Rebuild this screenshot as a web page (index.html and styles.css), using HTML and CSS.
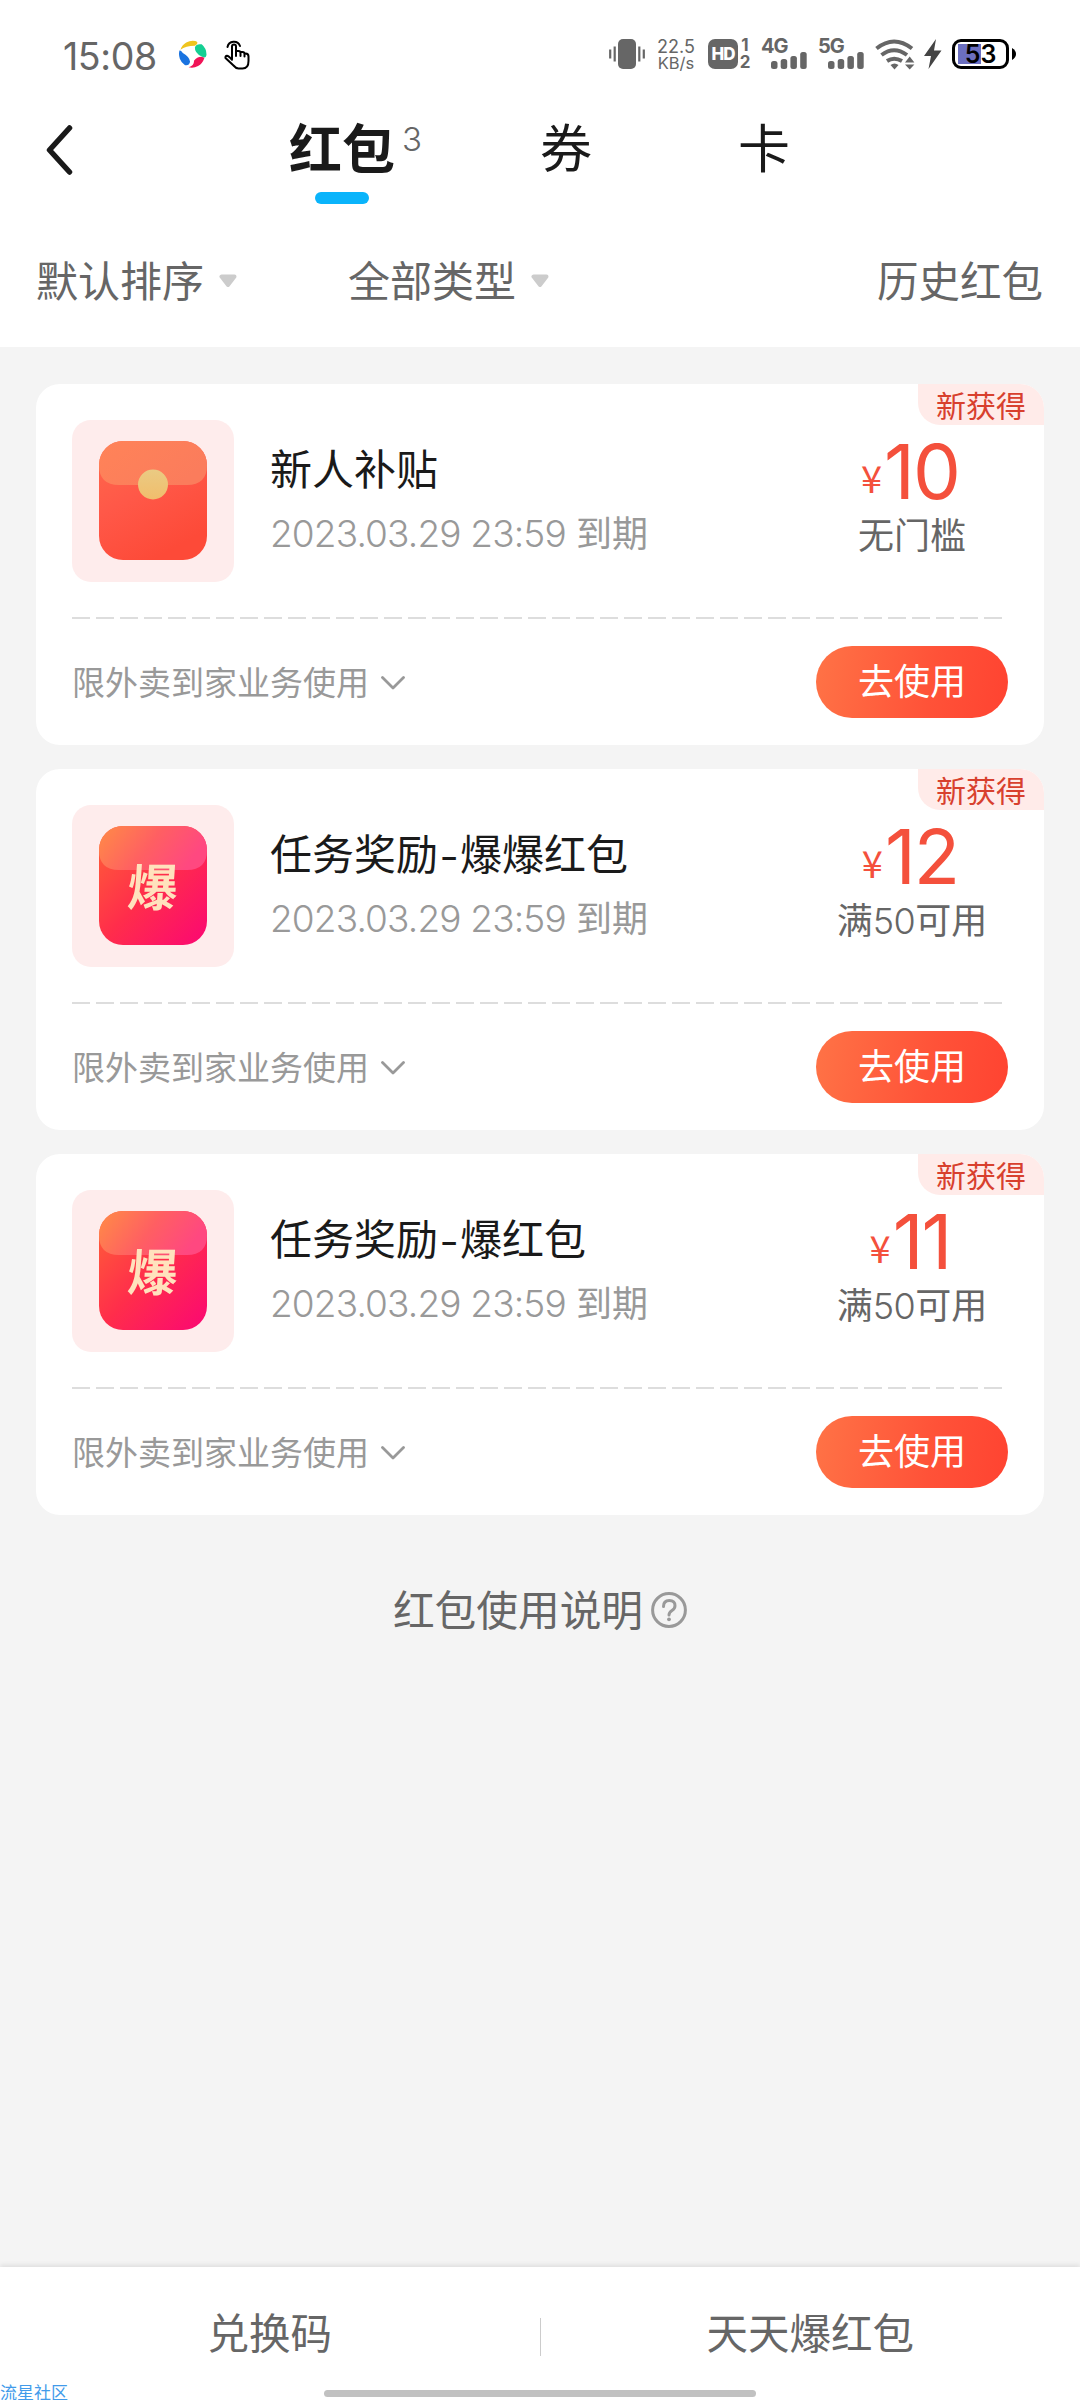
FILE: index.html
```html
<!DOCTYPE html>
<html lang="zh-CN">
<head>
<meta charset="utf-8">
<title>红包</title>
<link rel="stylesheet" href="styles.css">
</head>
<body>
<svg class="defs" width="0" height="0" aria-hidden="true">
  <defs>
    <linearGradient id="red" x1="0" y1="0" x2="0.5" y2="1"><stop offset="0" stop-color="#ff6a4c"/><stop offset="0.5" stop-color="#ff5848"/><stop offset="1" stop-color="#fd4a38"/></linearGradient>
    <linearGradient id="flap" x1="0" y1="0" x2="1" y2="0.5"><stop offset="0" stop-color="#ff8358"/><stop offset="1" stop-color="#fb7c5c"/></linearGradient>
    <linearGradient id="coin" x1="0" y1="0" x2="0" y2="1"><stop offset="0" stop-color="#eacb83"/><stop offset="1" stop-color="#f1bd6c"/></linearGradient>
    <linearGradient id="hot" x1="0" y1="0" x2="1" y2="1"><stop offset="0" stop-color="#ff6236"/><stop offset="0.5" stop-color="#ff2d4b"/><stop offset="1" stop-color="#fb0773"/></linearGradient>
    <linearGradient id="hotflap" x1="0" y1="0" x2="1" y2="0.3"><stop offset="0" stop-color="#ff8c46"/><stop offset="0.55" stop-color="#ff5f62"/><stop offset="1" stop-color="#ff4880"/></linearGradient>
    <symbol id="plain" viewBox="0 0 162 162">
      <rect x="27" y="21" width="108" height="119" rx="24" fill="url(#red)"/>
      <path d="M27 45a24 24 0 0 1 24-24h60a24 24 0 0 1 24 24q0 20-20 20H47q-20 0-20-20z" fill="url(#flap)"/>
      <circle cx="81" cy="64.500" r="15" fill="url(#coin)"/>
    </symbol>
    <symbol id="burst" viewBox="0 0 162 162">
      <rect x="27" y="21" width="108" height="119" rx="24" fill="url(#hot)"/>
      <path d="M27 45a24 24 0 0 1 24-24h60a24 24 0 0 1 24 24q0 20-20 20H47q-20 0-20-20z" fill="url(#hotflap)"/>
    </symbol>
    <symbol id="down" viewBox="0 0 24 14"><path d="M1.500 1.500 12 12 22.500 1.500" fill="none" stroke="#999" stroke-width="2.800" stroke-linecap="round" stroke-linejoin="round"/></symbol>
    <symbol id="tri" viewBox="0 0 18 14"><path d="M2.500 2.500h13L9 11z" fill="#ccc" stroke="#ccc" stroke-width="4" stroke-linejoin="round"/></symbol>
    <symbol id="bars" viewBox="0 0 36 17" fill="#666"><rect y="9" width="6.500" height="8" rx="2.500"/><rect x="9.700" y="7" width="6.500" height="10" rx="2.500"/><rect x="19.400" y="4" width="6.500" height="13" rx="2.500"/><rect x="29.200" y="0" width="6.500" height="17" rx="2.500"/></symbol>
  </defs>
</svg>
<div class="page">
  <header class="top">
    <div class="status">
      <span class="time">15:08</span>
      <svg class="wheel" viewBox="0 0 30 30">
        <path d="M2.500 10.500A13.500 13.500 0 0 1 18 1.500Q22.500 3 17.500 6.500Q8 6.500 2.500 10.500z" fill="#efc41e"/>
        <path d="M17.500 8Q19 4 24.500 5A14 14 0 0 1 29.500 15.500Q29 20.500 24.500 17.500Q17 14 17.500 8z" fill="#14cf93"/>
        <path d="M27 20A13.500 13.500 0 0 1 11 28.800Q17 26.500 16.500 22Q20 17.500 25 18Q28 18.500 27 20z" fill="#f01457"/>
        <path d="M1.500 11.500Q3 10.500 5 14Q12 18 12.500 23Q11.500 27.500 7 26.500A14 14 0 0 1 1.500 11.500z" fill="#1a73e0"/>
      </svg>
      <svg class="hand" viewBox="0 0 26 31" fill="none" stroke="#000" stroke-width="2" stroke-linecap="round" stroke-linejoin="round">
        <path d="M8 20V7.500a2 2 0 0 1 4 0V17M12 12h2.500a2 2 0 0 1 2 2v3M16.500 13h2a2 2 0 0 1 2 2v2.500M20.500 14.500h1a3 3 0 0 1 3 3V22q0 7.500-6 7.500h-4q-2.500 0-5-3L1.500 19q-.5-2 1.500-2.200 1.500 0 5 4"/>
        <path d="M3.500 8A6.500 6.500 0 0 1 16 7"/>
      </svg>
      <svg class="vib" viewBox="0 0 36 30" fill="#666"><rect x="9" width="18" height="30" rx="5"/><path d="M1.200 10.500v9M5.700 7.500v15M30.300 7.500v15M34.800 10.500v9" stroke="#666" stroke-width="2.200"/></svg>
      <div class="speed"><span>22.5</span><span>KB/s</span></div>
      <div class="hd">HD</div>
      <div class="sim"><span>1</span><span>2</span></div>
      <div class="net"><span>4G</span><svg><use href="#bars"/></svg></div>
      <div class="net net2"><span>5G</span><svg><use href="#bars"/></svg></div>
      <svg class="wifi" viewBox="0 0 40 31"><g fill="none" stroke="#666" stroke-width="4"><path d="M1.500 9.500Q19 -4.500 37 9.500"/><path d="M6.500 16Q19 6.500 32 16"/><path d="M12 22Q19 17.500 27 22"/></g><path d="M15.500 26q4-3 8 0l-4 4.500zM30 23.500l4.700-6 4.700 6zM30 25.500h9.400l-4.700 5z" fill="#666"/></svg>
      <svg class="bolt" viewBox="0 0 18 30"><path d="M12 0 0 17h7L4.500 30 17.500 11.500H10z" fill="#444"/></svg>
      <div class="battery"><span>53</span></div>
      <svg class="nub" viewBox="0 0 4 12"><path d="M0 0q4 2.500 4 6t-4 6z"/></svg>
    </div>
    <nav class="tabs">
      <svg class="back" viewBox="0 0 28 50"><path d="M24.500 3 4.500 25 24.500 47" fill="none" stroke="#1a1a1a" stroke-width="5.500" stroke-linecap="round" stroke-linejoin="round"/></svg>
      <div class="tab active"><b>红包</b><i></i></div>
      <span class="count">3</span>
      <div class="tab coupon">券</div>
      <div class="tab cardtab">卡</div>
    </nav>
    <div class="filters">
      <span>默认排序</span><svg class="tri"><use href="#tri"/></svg>
      <span class="type">全部类型</span><svg class="tri"><use href="#tri"/></svg>
      <span class="history">历史红包</span>
    </div>
  </header>

  <main class="list">
    <article class="card">
      <span class="badge">新获得</span>
      <div class="info">
        <div class="icon"><svg><use href="#plain"/></svg></div>
        <div class="desc"><h2>新人补贴</h2><p><span class="num">2023.03.29 23:59</span>到期</p></div>
        <div class="worth"><div class="price"><small>¥</small><span>10</span></div><p>无门槛</p></div>
      </div>
      <svg class="dash"><path d="M0 1H931"/></svg>
      <div class="foot"><span>限外卖到家业务使用</span><svg class="chev"><use href="#down"/></svg><a class="use">去使用</a></div>
    </article>
    <article class="card">
      <span class="badge">新获得</span>
      <div class="info">
        <div class="icon"><svg><use href="#burst"/></svg><em>爆</em></div>
        <div class="desc"><h2>任务奖励<span class="hy">-</span>爆爆红包</h2><p><span class="num">2023.03.29 23:59</span>到期</p></div>
        <div class="worth"><div class="price"><small>¥</small><span>12</span></div><p>满<span class="fifty">50</span>可用</p></div>
      </div>
      <svg class="dash"><path d="M0 1H931"/></svg>
      <div class="foot"><span>限外卖到家业务使用</span><svg class="chev"><use href="#down"/></svg><a class="use">去使用</a></div>
    </article>
    <article class="card">
      <span class="badge">新获得</span>
      <div class="info">
        <div class="icon"><svg><use href="#burst"/></svg><em>爆</em></div>
        <div class="desc"><h2>任务奖励<span class="hy">-</span>爆红包</h2><p><span class="num">2023.03.29 23:59</span>到期</p></div>
        <div class="worth"><div class="price"><small>¥</small><span>11</span></div><p>满<span class="fifty">50</span>可用</p></div>
      </div>
      <svg class="dash"><path d="M0 1H931"/></svg>
      <div class="foot"><span>限外卖到家业务使用</span><svg class="chev"><use href="#down"/></svg><a class="use">去使用</a></div>
    </article>
    <div class="help"><span>红包使用说明</span>
      <svg viewBox="0 0 36 36" fill="none" stroke="#999" stroke-width="3"><circle cx="18" cy="18" r="16.400"/><path d="M12.500 14.500q0-6 5.800-6t5.700 5.200q0 2.800-3 4.800t-3 4.500" stroke-linecap="round"/><circle cx="18" cy="27.300" r="1.900" fill="#999" stroke="none"/></svg>
    </div>
  </main>

  <footer class="bottom">
    <span class="act">兑换码</span><i></i><span class="act">天天爆红包</span>
  </footer>
  <div class="home"></div>
  <div class="mark">流星社区</div>
</div>
</body>
</html>
```
FILE: styles.css
```css
* { box-sizing: border-box; margin: 0; padding: 0; }
body { background: #f4f4f4; font-family: "Noto Sans CJK SC", sans-serif; color: #666; }
svg { display: block; flex: none; }
.defs { position: absolute; }
.page { position: relative; width: 1080px; height: 2400px; display: flex; flex-direction: column; overflow: hidden; }
i, em { font-style: normal; }

.top { background: #fff; height: 347px; flex: none; }
.status { display: flex; align-items: flex-start; height: 100px; padding: 39px 0 0 63px; font-family: Inter, sans-serif; }
.time { width: 115px; font-size: 37.500px; line-height: 35px; letter-spacing: -.4px; }
.wheel { width: 29px; height: 30px; }
.hand { width: 26px; height: 31px; margin-left: 17px; }
.vib { width: 36px; height: 30px; margin-left: 359px; }
.speed { display: flex; flex-direction: column; width: 38px; margin-left: 12px; font-size: 18px; line-height: 16px; text-align: center; white-space: nowrap; align-items: center; }
.speed span:last-child { font-size: 16.500px; }
.hd { width: 30px; height: 30px; margin-left: 13px; border-radius: 7px; background: #666; color: #fff; font-size: 17px; font-weight: 800; line-height: 30px; text-align: center; letter-spacing: -1px; }
.sim { display: flex; flex-direction: column; width: 12px; margin-left: 1px; font-size: 17px; font-weight: 700; line-height: 13px; text-align: center; align-items: center; }
.sim span:last-child { line-height: 20px; }
.net { width: 46px; margin-left: 10px; }
.net span { display: block; font-size: 20px; line-height: 15px; height: 13px; font-weight: 700; letter-spacing: -1px; }
.net svg { width: 36px; height: 17px; margin-left: 10px; }
.net2 { margin-left: 11px; }
.wifi { width: 40px; height: 31px; margin-left: 11px; }
.bolt { width: 18px; height: 30px; margin-left: 9px; }
.battery { width: 57px; height: 30px; margin-left: 10px; border: 3px solid #000; border-radius: 9px; background: linear-gradient(90deg, #6b6fc0 23px, #fff 23px) 3px 2px / 45px 20px no-repeat; color: #000; font-size: 25px; font-weight: 600; line-height: 24px; text-align: center; }
.nub { width: 4px; height: 12px; margin: 9px 0 0 3px; }

.tabs { display: flex; height: 120px; padding: 0 0 0 45px; color: #1a1a1a; font-size: 52px; line-height: 74px; }
.back { width: 28px; height: 50px; margin-top: 25px; }
.tab { margin-top: 9px; }
.active { display: flex; flex-direction: column; align-items: center; width: 106px; margin-left: 216px; }
.active b { font-size: 53px; line-height: 74px; white-space: nowrap; }
.active i { width: 54px; height: 12px; margin-top: 9px; border-radius: 6px; background: #0ab4fb; }
.count { width: 20px; margin: 19px 0 0 7px; color: #666; font: 300 33px/40px Inter, sans-serif; }
.coupon { margin-left: 118px; }
.cardtab { margin-left: 146px; }

.filters { display: flex; align-items: center; padding: 29px 37px 0 36px; font-size: 42px; line-height: 60px; }
.tri { width: 18px; height: 14px; margin: 3px 0 0 15px; }
.type { margin-left: 111px; }
.history { margin-left: auto; font-size: 41.500px; }

.list { flex: 1; padding: 37px 36px 0; display: flex; flex-direction: column; gap: 24px; }
.card { position: relative; height: 361px; flex: none; padding: 36px; border-radius: 24px; background: #fff; }
.badge { position: absolute; top: 0; right: 0; width: 126px; height: 41px; padding-left: 18px; border-radius: 0 24px 0 22px; background: #ffebe9; color: #d8402e; font-size: 30px; line-height: 40px; }
.info { display: flex; height: 162px; }
.icon { position: relative; width: 162px; height: 162px; border-radius: 19px; background: #feecec; }
.icon svg { width: 162px; height: 162px; }
.icon em { position: absolute; inset: 0; color: #ffe2bd; font-size: 50px; font-weight: 700; line-height: 158px; text-align: center; transform: skewX(-4deg); }
.desc { flex: 1; padding: 17px 0 0 36px; }
.desc h2 { color: #1a1a1a; font-size: 42px; font-weight: 400; line-height: 60px; white-space: nowrap; }
.hy { display: inline-block; width: 22px; text-align: center; transform: scaleX(1.25); }
.desc p { margin-top: 9px; display: flex; color: #999; font-size: 36px; line-height: 51px; }
.num { width: 306px; padding-top: 2px; font-family: Inter, sans-serif; font-weight: 300; font-size: 37px; letter-spacing: -.85px; white-space: nowrap; }
.worth { width: 192px; display: flex; flex-direction: column; align-items: center; padding-top: 16px; }
.price { display: flex; align-items: flex-start; height: 70px; color: #f4503c; font: 400 76px/70px Inter, sans-serif; letter-spacing: -2px; }
.price small { margin: 21px 4px 0 -4px; font: 400 38px/40px "Noto Sans CJK SC", sans-serif; }
.worth p { font-size: 36px; line-height: 50px; margin-top: 2px; white-space: nowrap; }
.fifty { font-family: Inter, sans-serif; font-weight: 300; line-height: 1; letter-spacing: -.5px; }
.dash { width: 931px; height: 2px; margin-top: 35px; }
.dash path { stroke: #ddd; stroke-width: 2; stroke-dasharray: 18 6; }
.foot { display: flex; align-items: center; height: 72px; margin-top: 27px; color: #999; font-size: 33px; line-height: 48px; }
.foot span { margin-top: -2px; }
.chev { width: 24px; height: 14px; margin: 2px 0 0 12px; }
.use { width: 192px; height: 72px; margin-left: auto; border-radius: 36px; background: linear-gradient(100deg, #ff7346, #ff5238 60%, #ff4331); color: #fff; font-size: 36px; line-height: 66px; text-align: center; }

.help { display: flex; justify-content: center; align-items: center; margin-top: 42px; font-size: 41.700px; line-height: 60px; gap: 8px; }
.help span { margin-top: -3px; }
.help svg { width: 36px; height: 36px; margin-top: 1px; }

.bottom { display: flex; align-items: center; flex: none; height: 133px; background: #fff; box-shadow: 0 -2px 5px rgba(0,0,0,.09); font-size: 41.500px; line-height: 60px; }
.act { flex: 1; margin-top: -5px; text-align: center; }
.bottom i { width: 1px; height: 38px; margin-top: 6px; background: #ccc; }
.home { position: absolute; left: 324px; top: 2390px; width: 432px; height: 7px; border-radius: 4px; background: #c1c1c1; }
.mark { position: absolute; left: 0; top: 2380px; color: #429bea; font-size: 17px; line-height: 24px; }
```
